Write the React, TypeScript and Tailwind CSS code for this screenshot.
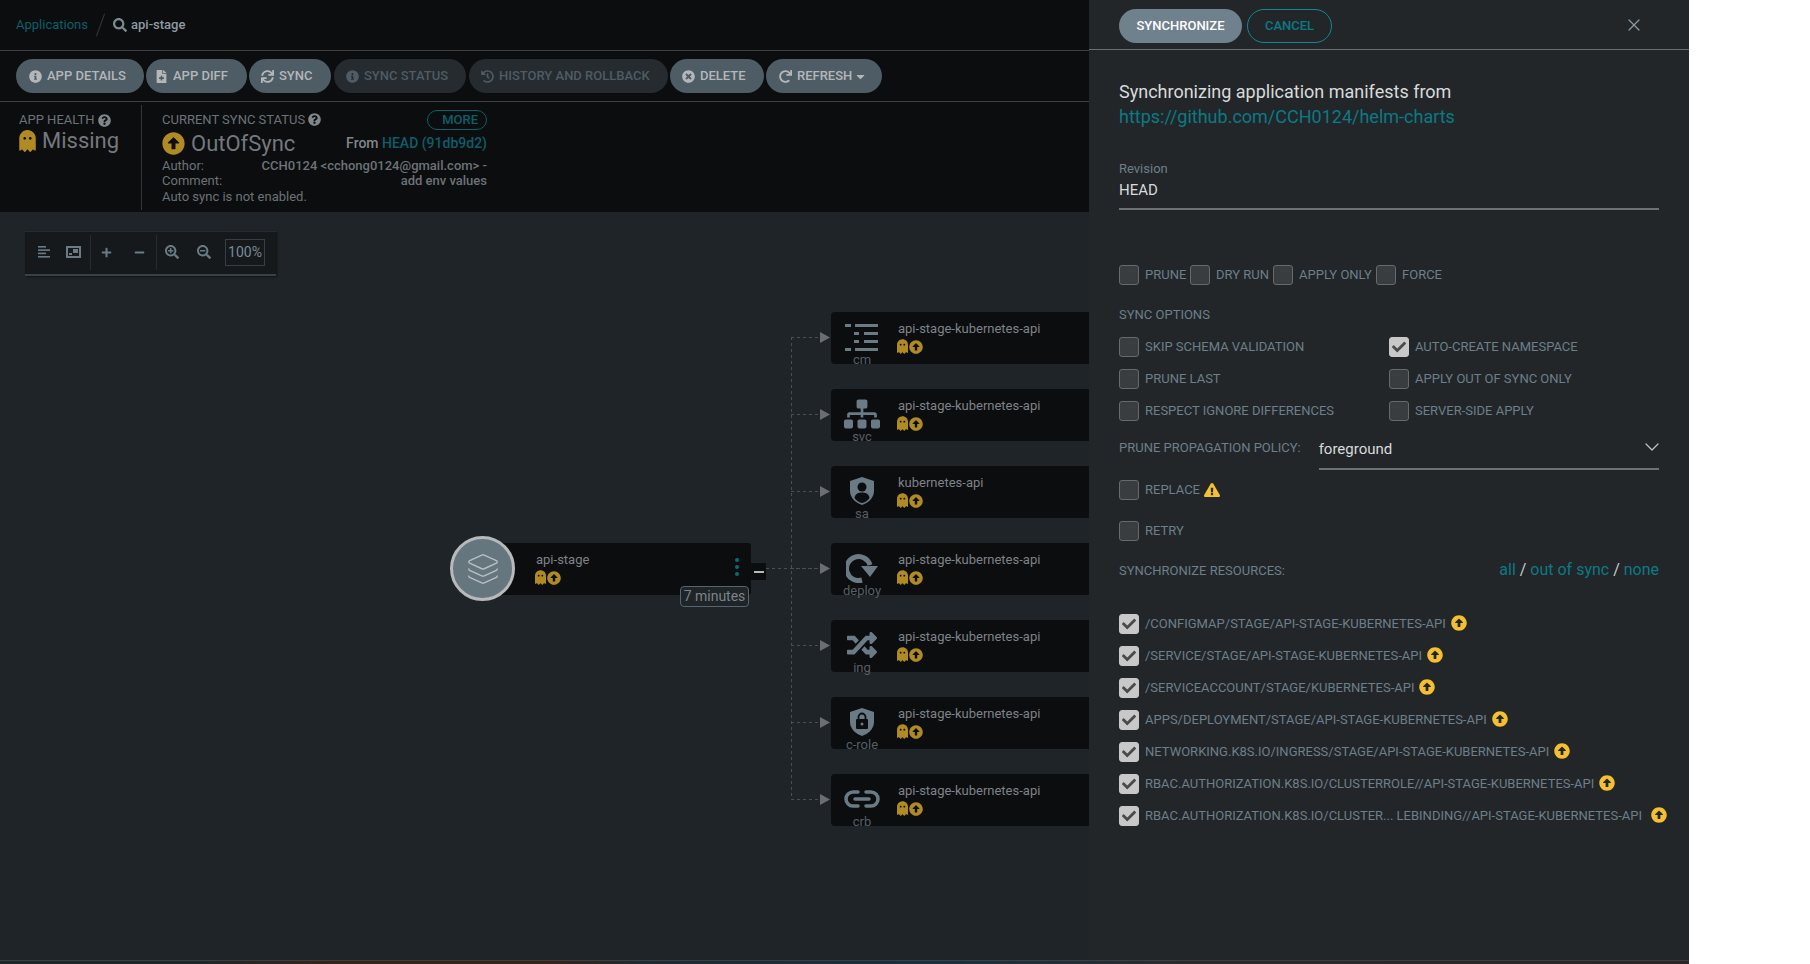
import {
  FaArrowAltCircleUp, FaCaretDown, FaCheck, FaExclamationTriangle, FaFileMedical, FaGhost, FaHistory,
  FaInfoCircle, FaMinus, FaPlus, FaQuestionCircle, FaRandom, FaRedo, FaSearch, FaSearchMinus, FaSearchPlus,
  FaSitemap, FaSync, FaTimesCircle,
} from 'react-icons/fa'
import { ChevronDown, Layers, X } from 'lucide-react'
import type { ReactNode } from 'react'

const FONT = 'font-["Roboto","Liberation_Sans",sans-serif]'

function ActionButton({ icon, label, off, w }: { icon: ReactNode; label: ReactNode; off?: boolean; w: string }) {
  return (
    <div className={`${w} h-[34px] rounded-[17px] flex items-center gap-[5px] text-[13px] font-medium whitespace-nowrap ${off ? 'bg-[#252b2f] text-[#4f5c65]' : 'bg-[#4e5c65] text-[#b4b7b9]'}`}>
      {icon}
      {label}
    </div>
  )
}

function Box({ checked }: { checked?: boolean }) {
  return (
    <div className={`w-[20px] h-[20px] shrink-0 rounded-[3px] border flex items-center justify-center ${checked ? 'bg-[#c8c8c8] border-[#c8c8c8]' : 'bg-[#3a3d3f] border-[#67696b]'}`}>
      {checked && <FaCheck className="text-[#4a4a4a] text-[14px]" />}
    </div>
  )
}

function Check({ label, checked, w }: { label: string; checked?: boolean; w?: string }) {
  return (
    <div className={`flex items-center gap-[6px] text-[13px] text-[#6d7f8b] whitespace-nowrap ${w ?? ''}`}>
      <Box checked={checked} />
      <span>{label}</span>
    </div>
  )
}

const iconColor = '#6a7b86'

function CmIcon() {
  return (
    <svg width="34" height="28" viewBox="0 0 34 28" fill={iconColor}>
      <rect x="0" y="1" width="6" height="3" />
      <rect x="10" y="1" width="23" height="3" />
      <rect x="9" y="9" width="5" height="3" />
      <rect x="19" y="9" width="14" height="3" />
      <rect x="9" y="17" width="5" height="3" />
      <rect x="19" y="17" width="14" height="3" />
      <rect x="0" y="25" width="6" height="3" />
      <rect x="10" y="25" width="23" height="3" />
    </svg>
  )
}

function SaIcon() {
  return (
    <svg width="24" height="28" viewBox="0 0 24 28">
      <path d="M12 0 L24 4 V14 C24 21 18 26 12 28 C6 26 0 21 0 14 V4 Z" fill={iconColor} />
      <circle cx="12" cy="10" r="4.5" fill="#0c0d0e" />
      <path d="M4.5 21 C5 16.5 9 15.5 12 15.5 C15 15.5 19 16.5 19.5 21 C17.5 24 14.5 25.5 12 26 C9.5 25.5 6.500 24 4.5 21 Z" fill="#0c0d0e" />
    </svg>
  )
}

function LockIcon() {
  return (
    <svg width="24" height="28" viewBox="0 0 24 28">
      <path d="M12 0 L24 4 V14 C24 21 18 26 12 28 C6 26 0 21 0 14 V4 Z" fill={iconColor} />
      <rect x="6" y="11" width="12" height="10" rx="1" fill="#0c0d0e" />
      <path d="M8.500 11 V9 a3.500 3.500 0 0 1 7 0 V11" fill="none" stroke="#0c0d0e" strokeWidth="1.800" />
      <circle cx="12" cy="16" r="1.500" fill={iconColor} />
    </svg>
  )
}

function DeployIcon() {
  return (
    <svg width="32" height="30" viewBox="0 0 32 30" fill="none">
      <path d="M16 27 A12 12 0 1 1 24 12" stroke={iconColor} strokeWidth="5" />
      <path d="M15 13 H32 L24 24 Z" fill={iconColor} />
    </svg>
  )
}

function LinkIcon() {
  return (
    <svg width="36" height="18" viewBox="0 0 36 18" fill="none" stroke={iconColor} strokeWidth="3.500" strokeLinecap="round">
      <path d="M14 2 H9 a7 7 0 0 0 0 14 H14" />
      <path d="M22 2 H27 a7 7 0 0 1 0 14 H22" />
      <path d="M11 9 H25" />
    </svg>
  )
}

function FitIcon() {
  return (
    <svg width="15" height="12" viewBox="0 0 15 12" fill={iconColor}>
      <path fillRule="evenodd" d="M0 0 H15 V12 H0 Z M2 2 V10 H13 V2 Z" />
      <rect x="7" y="3" width="5" height="4" />
      <rect x="3" y="7" width="3" height="2" />
    </svg>
  )
}

function AlignIcon() {
  return (
    <svg width="12" height="12" viewBox="0 0 12 12" fill={iconColor}>
      <rect x="0" y="0" width="8" height="1.600" />
      <rect x="0" y="3.300" width="12" height="1.600" />
      <rect x="0" y="6.600" width="8" height="1.600" />
      <rect x="0" y="10" width="12" height="1.600" />
    </svg>
  )
}

function NodeStatus({ left }: { left: string }) {
  return (
    <div className={`absolute ${left} top-[27px] flex items-center gap-[1px]`}>
      <FaGhost className="text-[#b08a22] text-[15px] w-[11px]" />
      <FaArrowAltCircleUp className="text-[#b08a22] text-[14px]" />
    </div>
  )
}

const nodes: { name: string; kind: string; icon: ReactNode }[] = [
  { name: 'api-stage-kubernetes-api', kind: 'cm', icon: <CmIcon /> },
  { name: 'api-stage-kubernetes-api', kind: 'svc', icon: <FaSitemap size={36} color={iconColor} /> },
  { name: 'kubernetes-api', kind: 'sa', icon: <SaIcon /> },
  { name: 'api-stage-kubernetes-api', kind: 'deploy', icon: <DeployIcon /> },
  { name: 'api-stage-kubernetes-api', kind: 'ing', icon: <FaRandom size={30} color={iconColor} /> },
  { name: 'api-stage-kubernetes-api', kind: 'c-role', icon: <LockIcon /> },
  { name: 'api-stage-kubernetes-api', kind: 'crb', icon: <LinkIcon /> },
]

const resources = [
  '/CONFIGMAP/STAGE/API-STAGE-KUBERNETES-API',
  '/SERVICE/STAGE/API-STAGE-KUBERNETES-API',
  '/SERVICEACCOUNT/STAGE/KUBERNETES-API',
  'APPS/DEPLOYMENT/STAGE/API-STAGE-KUBERNETES-API',
  'NETWORKING.K8S.IO/INGRESS/STAGE/API-STAGE-KUBERNETES-API',
  'RBAC.AUTHORIZATION.K8S.IO/CLUSTERROLE//API-STAGE-KUBERNETES-API',
]

function Graph() {
  const centers = nodes.map((_, i) => 125 + i * 77)
  return (
    <>
      <svg className="absolute left-0 top-0" width="1089" height="750" fill="none">
        <g stroke="#4a4f52" strokeDasharray="3 3">
          <path d="M791.500 125 V587" />
          <path d="M766 356.500 H821" />
          {centers.map(y => <path key={y} d={`M791 ${y + 0.5} H821`} />)}
        </g>
        {centers.map(y => <path key={y} d={`M820 ${y - 5} L830 ${y + 0.5} L820 ${y + 6} Z`} fill="#6b6f71" />)}
      </svg>

      <div className="absolute left-[482px] top-[331px] w-[269px] h-[52px] bg-[#0c0d0e] rounded-r-[3px]">
        <div className="absolute left-[54px] top-[7px] text-[13px] leading-[20px] text-[#7d8389]">api-stage</div>
        <NodeStatus left="left-[53px]" />
        <div className="absolute left-[253px] top-[15px] flex flex-col gap-[3px]">
          <i className="w-[4px] h-[4px] rounded-full bg-[#0a6a78]" />
          <i className="w-[4px] h-[4px] rounded-full bg-[#0a6a78]" />
          <i className="w-[4px] h-[4px] rounded-full bg-[#0a6a78]" />
        </div>
      </div>
      <div className="absolute left-[450px] top-[324px] w-[65px] h-[65px] rounded-full bg-[#66767f] border-[3px] border-[#b7b9ba] flex items-center justify-center">
        <Layers size={34} strokeWidth={1} color="#b9bfc4" />
      </div>
      <div className="absolute left-[751px] top-[351px] w-[15px] h-[17px] bg-[#0c0d0e] flex items-center justify-center">
        <div className="w-[10px] h-[2px] bg-[#b7b9ba]" />
      </div>
      <div className="absolute left-[680px] top-[374px] w-[69px] h-[21px] rounded-[4px] border border-[#56646d] bg-[#1e2427] text-[14px] leading-[19px] text-center text-[#7d8389] whitespace-nowrap">7 minutes</div>

      {nodes.map((n, i) => (
        <div key={i} className="absolute left-[831px] w-[300px] h-[52px] bg-[#0c0d0e] rounded-[4px]" style={{ top: 100 + i * 77 }}>
          <div className="absolute left-0 top-0 w-[62px] h-[50px] flex items-center justify-center">{n.icon}</div>
          <div className="absolute left-0 top-[38px] w-[62px] text-center text-[13px] leading-[20px] text-[#565f66]">{n.kind}</div>
          <div className="absolute left-[67px] top-[7px] text-[13px] leading-[20px] text-[#7d8389] whitespace-nowrap">{n.name}</div>
          <NodeStatus left="left-[66px]" />
        </div>
      ))}
    </>
  )
}

function LeftPane() {
  return (
    <div className="w-[1089px] shrink-0 h-full flex flex-col overflow-hidden">
      <div className="h-[51px] shrink-0 bg-[#0c0d0e] border-b border-[#3e4041] flex items-center pl-[16px] text-[13px]">
        <span className="text-[#0a5f6b]">Applications</span>
        <span className="mx-[12px] w-[1px] h-[24px] bg-[#33373a] rotate-[20deg]" />
        <FaSearch className="text-[#7d8a93] text-[14px] mr-[4px]" />
        <span className="text-[#8e9ba4] font-medium">api-stage</span>
      </div>
      <div className="h-[51px] shrink-0 bg-[#0c0d0e] border-b border-[#3e4041] flex items-center pl-[16px] gap-[2px]">
        <ActionButton w="w-[128px] pl-[13px]" icon={<FaInfoCircle className="text-[13px]" />} label="APP DETAILS" />
        <ActionButton w="w-[101px] pl-[9px]" icon={<FaFileMedical className="text-[13px]" />} label="APP DIFF" />
        <ActionButton w="w-[82px] pl-[12px]" icon={<FaSync className="text-[13px]" />} label="SYNC" />
        <ActionButton w="w-[132px] ml-[1px] pl-[12px]" off icon={<FaInfoCircle className="text-[13px]" />} label="SYNC STATUS" />
        <ActionButton w="w-[199px] ml-[1px] pl-[12px]" off icon={<FaHistory className="text-[13px]" />} label="HISTORY AND ROLLBACK" />
        <ActionButton w="w-[94px] pl-[12px]" icon={<FaTimesCircle className="text-[13px]" />} label="DELETE" />
        <ActionButton w="w-[116px] pl-[13px]" icon={<FaRedo className="text-[13px]" />} label={<span className="flex items-center">REFRESH<FaCaretDown className="text-[13px] ml-[2px]" /></span>} />
      </div>
      <div className="h-[110px] shrink-0 bg-[#0c0d0e] flex pt-[3px] pb-[2px] text-[#6b7378]">
        <div className="w-[142px] shrink-0 border-r border-[#33373a] pl-[19px] pt-[7px]">
          <div className="flex items-center gap-[3px] text-[13px] leading-[16px]">APP HEALTH <FaQuestionCircle className="text-[#81868a] text-[13px]" /></div>
          <div className="flex items-center gap-[6px] text-[22px] leading-[30px] text-[#73797e] mt-[-2px]">
            <FaGhost className="text-[#b08a22] text-[22px] w-[17px]" />
            Missing
          </div>
        </div>
        <div className="w-[325px] ml-[20px] pt-[5px] relative">
          <div className="flex items-center justify-between">
            <div className="flex items-center gap-[3px] text-[13px] leading-[16px] mb-[1px]">CURRENT SYNC STATUS <FaQuestionCircle className="text-[#81868a] text-[13px]" /></div>
            <div className="w-[60px] h-[20px] rounded-[10px] border border-[#0a5f6b] text-[#0a5f6b] text-[13px] leading-[18px] text-right pr-[8px] font-medium">MORE</div>
          </div>
          <div className="flex items-center justify-between h-[26px]">
            <div className="flex items-center gap-[6px] text-[22px] text-[#73797e]">
              <FaArrowAltCircleUp className="text-[#b08a22] text-[23px]" />
              OutOfSync
            </div>
            <div className="text-[14px] font-medium text-[#81868a]">From <span className="text-[#0a5f6b]">HEAD (91db9d2)</span></div>
          </div>
          <div className="flex justify-between text-[13px] leading-[15.5px] mt-[1.5px]">
            <span>Author:</span>
            <span className="font-medium">CCH0124 &lt;cchong0124@gmail.com&gt; -</span>
          </div>
          <div className="flex justify-between text-[13px] leading-[15.5px]">
            <span>Comment:</span>
            <span className="font-medium">add env values</span>
          </div>
          <div className="text-[13px] leading-[15.5px]">Auto sync is not enabled.</div>
        </div>
      </div>
      <div className="flex-1 relative bg-[#1e2427]">
        <Graph />
        <div className="relative ml-[25px] mt-[19px] w-[251px] h-[45px] pb-[2px] bg-[#15191b] border-t border-[#262c2f] border-b-2 border-b-[#3a4145] flex items-center text-[#6a7b86] shadow-[1px_1px_2px_rgba(0,0,0,0.5)]">
          <div className="ml-[13px] w-[12px]"><AlignIcon /></div>
          <div className="ml-[16px]"><FitIcon /></div>
          <div className="ml-[9px] w-[1px] h-[35px] bg-[#262c2f]" />
          <FaPlus className="ml-[10px] text-[11px]" />
          <FaMinus className="ml-[22px] text-[11px]" />
          <div className="ml-[11px] w-[1px] h-[35px] bg-[#262c2f]" />
          <FaSearchPlus className="ml-[8px] text-[14px]" />
          <FaSearchMinus className="ml-[18px] text-[14px]" />
          <div className="ml-[14px] w-[40px] h-[27px] border border-[#383f43] text-[14px] leading-[25px] text-center text-[#7a8b96]">100%</div>
        </div>
      </div>
    </div>
  )
}

function SyncPanel() {
  return (
    <div className="w-[600px] shrink-0 h-full bg-[#222628]">
      <div className="h-[50px] border-b border-[#6b6e70] flex items-center pl-[30px] pt-[3px] relative">
        <div className="w-[123px] h-[34px] rounded-[17px] bg-[#6f818c] text-white text-[13px] font-medium flex items-center justify-center">SYNCHRONIZE</div>
        <div className="ml-[5px] w-[85px] h-[34px] rounded-[17px] border border-[#0d8a99] text-[#0a7a86] text-[13px] font-medium flex items-center justify-center">CANCEL</div>
        <X size={20} strokeWidth={1.500} className="absolute left-[535px] top-[15px] text-[#8b9aa4]" />
      </div>
      <div className="pl-[30px] pr-[30px]">
        <div className="mt-[29px] text-[18px] leading-[25px] text-[#d8dadb]">Synchronizing application manifests from</div>
        <div className="text-[18px] leading-[25px] text-[#0a7a86]">https://github.com/CCH0124/helm-charts</div>
        <div className="mt-[31px] text-[13px] leading-[18px] text-[#6d7f8b]">Revision</div>
        <div className="h-[32px] border-b-2 border-[#6e7072] text-[15px] leading-[24px] text-[#d8dadb]">HEAD</div>
        <div className="mt-[55px] flex">
          <Check label="PRUNE" w="w-[71px]" />
          <Check label="DRY RUN" w="w-[83px]" />
          <Check label="APPLY ONLY" w="w-[103px]" />
          <Check label="FORCE" />
        </div>
        <div className="mt-[20px] text-[13px] leading-[20px] text-[#6d7f8b]">SYNC OPTIONS</div>
        <div className="mt-[12px] grid grid-cols-[270px_1fr] gap-y-[12px]">
          <Check label="SKIP SCHEMA VALIDATION" />
          <Check label="AUTO-CREATE NAMESPACE" checked />
          <Check label="PRUNE LAST" />
          <Check label="APPLY OUT OF SYNC ONLY" />
          <Check label="RESPECT IGNORE DIFFERENCES" />
          <Check label="SERVER-SIDE APPLY" />
        </div>
        <div className="mt-[9px] flex h-[40px]">
          <div className="w-[200px] text-[13px] leading-[20px] pt-[8px] text-[#6d7f8b] whitespace-nowrap">PRUNE PROPAGATION POLICY:</div>
          <div className="w-[341px] border-b-2 border-[#6e7072] flex justify-between pt-[8px] text-[15px] leading-[22px] text-[#d8dadb]">
            foreground
            <ChevronDown size={24} strokeWidth={1.250} className="text-[#b9c4cc] mt-[-3px] mr-[-5px]" />
          </div>
        </div>
        <div className="mt-[10px] flex items-center gap-[6px] text-[13px] text-[#6d7f8b]">
          <Box />
          REPLACE
          <FaExclamationTriangle className="text-[#f4c030] text-[16px] ml-[-2px]" />
        </div>
        <div className="mt-[21px]"><Check label="RETRY" /></div>
        <div className="mt-[20px] flex items-center justify-between h-[20px]">
          <span className="text-[13px] text-[#6d7f8b]">SYNCHRONIZE RESOURCES:</span>
          <span className="text-[16px] text-[#c6ccd0] mt-[-2px]">
            <span className="text-[#0a7a86]">all</span> / <span className="text-[#0a7a86]">out of sync</span> / <span className="text-[#0a7a86]">none</span>
          </span>
        </div>
        <div className="mt-[33px] flex flex-col gap-[12px]">
          {resources.map(r => (
            <div key={r} className="flex items-center text-[13px] text-[#6d7f8b] whitespace-nowrap">
              <Box checked />
              <span className="ml-[6px]">{r}</span>
              <FaArrowAltCircleUp className="text-[#f4c030] text-[16px] ml-[5px] mt-[-3px]" />
            </div>
          ))}
          <div className="flex items-center text-[13px] text-[#6d7f8b] whitespace-nowrap">
            <Box checked />
            <span className="ml-[6px] w-[506px] shrink-0">RBAC.AUTHORIZATION.K8S.IO/CLUSTER... LEBINDING//API-STAGE-KUBERNETES-API</span>
            <FaArrowAltCircleUp className="text-[#f4c030] text-[16px] mt-[-3px] shrink-0" />
          </div>
        </div>
      </div>
    </div>
  )
}

export default function App() {
  return (
    <div className={`${FONT} relative w-[1810px] h-[964px] bg-white overflow-hidden`}>
      <div className="w-[1689px] h-full flex flex-col">
        <div className="flex-1 min-h-0 flex">
          <LeftPane />
          <SyncPanel />
        </div>
        <div className="h-[1px] shrink-0 bg-[#3c3f41]" />
        <div className="h-[3px] shrink-0 bg-[linear-gradient(90deg,#1f2628_0%,#1f2628_12%,#3a2219_20%,#3a2219_32%,#1f2a30_38%,#18303f_55%,#2a2a2c_70%,#2a2627_100%)]" />
      </div>
    </div>
  )
}
